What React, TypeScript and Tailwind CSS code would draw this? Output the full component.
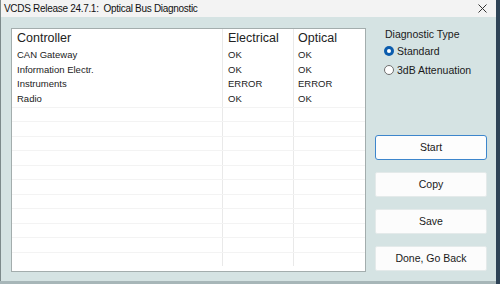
const rows = [
  { name: "CAN Gateway", el: "OK", op: "OK" },
  { name: "Information Electr.", el: "OK", op: "OK" },
  { name: "Instruments", el: "ERROR", op: "ERROR" },
  { name: "Radio", el: "OK", op: "OK" },
];

const emptyRows = Array.from({ length: 11 }, (_, i) => i);

function Radio({ checked, label }: { checked: boolean; label: string }) {
  return (
    <div className="flex h-[12px] items-center gap-[3px] pl-[9px]">
      {checked ? (
        <span className="flex h-[10px] w-[10px] items-center justify-center rounded-full bg-[#0b5cad]">
          <span className="h-[4px] w-[4px] rounded-full bg-white" />
        </span>
      ) : (
        <span className="h-[10px] w-[10px] rounded-full border border-[#6f6f6f] bg-white" />
      )}
      <span className="text-[10.5px] leading-[12px] text-[#1a1a1a]">{label}</span>
    </div>
  );
}

function Button({ label, focused }: { label: string; focused?: boolean }) {
  return (
    <button
      className={
        focused
          ? "h-[25px] w-[112px] rounded-[3px] border border-[#3d86cc] bg-[#fdfdfd] text-[10.5px] text-[#1a1a1a]"
          : "h-[25px] w-[112px] rounded-[2px] border border-[#e4eaea] bg-[#fcfcfc] text-[10.5px] text-[#1a1a1a]"
      }
    >
      {label}
    </button>
  );
}

export default function App() {
  return (
    <div
      className="flex h-[284px] w-[500px] overflow-hidden bg-[#33485a]"
      style={{ fontFamily: '"Liberation Sans", Arial, sans-serif' }}
    >
      <div className="flex w-[496px] flex-col bg-[#a7b6b8]">
        <div className="flex h-[281px] flex-col border-l border-[#7d8a8b] bg-[#d5e3e3]">
          {/* title bar */}
          <div className="flex h-[17px] items-center justify-between bg-[#f3f3f3] pl-[3px] pr-[9px]">
            <span className="text-[10px] tracking-[-0.3px] text-[#111]">
              VCDS Release 24.7.1:&nbsp; Optical Bus Diagnostic
            </span>
            <svg width="9" height="9" viewBox="0 0 9 9">
              <path d="M0.5 0.5 L8.5 8.5 M8.5 0.5 L0.5 8.5" stroke="#333" strokeWidth="1" />
            </svg>
          </div>

          <div className="flex">
            {/* table */}
            <div className="ml-[10px] mt-[11px] h-[244px] w-[355px] border border-[#a3adad] bg-white text-[#222]">
              <div className="flex h-[19px] items-center text-[12.5px]">
                <div className="h-full w-[211px] border-r border-[#e9e9e9] pl-[5px] leading-[19px]">Controller</div>
                <div className="h-full w-[71px] border-r border-[#e9e9e9] pl-[5px] leading-[19px]">Electrical</div>
                <div className="h-full w-[69px] pl-[4px] leading-[19px]">Optical</div>
              </div>
              {rows.map((r) => (
                <div key={r.name} className="flex h-[14.7px] text-[9.5px] leading-[14.7px]">
                  <div className="w-[211px] border-r border-[#e9e9e9] pl-[5px]">{r.name}</div>
                  <div className="w-[71px] border-r border-[#e9e9e9] pl-[5px]">{r.el}</div>
                  <div className="w-[69px] pl-[4px]">{r.op}</div>
                </div>
              ))}
              {emptyRows.map((i) => (
                <div key={i} className="flex h-[14.5px] border-t border-[#f3f3f3]">
                  <div className="w-[211px] border-r border-[#e9e9e9]" />
                  <div className="w-[71px] border-r border-[#e9e9e9]" />
                  <div className="w-[69px]" />
                </div>
              ))}
            </div>

            {/* right panel */}
            <div className="ml-[9px] mt-[11px] flex w-[112px] flex-col">
              <div className="h-[12px] pl-[10px] text-[10.5px] leading-[12px] text-[#1a1a1a]">Diagnostic Type</div>
              <div className="mt-[5px]">
                <Radio checked label="Standard" />
              </div>
              <div className="mt-[7px]">
                <Radio checked={false} label="3dB Attenuation" />
              </div>
              <div className="mt-[59px] flex flex-col gap-[12px]">
                <Button label="Start" focused />
                <Button label="Copy" />
                <Button label="Save" />
                <Button label="Done, Go Back" />
              </div>
            </div>
          </div>
        </div>
      </div>
      <div className="w-[4px] bg-[#2e4356]" />
    </div>
  );
}
